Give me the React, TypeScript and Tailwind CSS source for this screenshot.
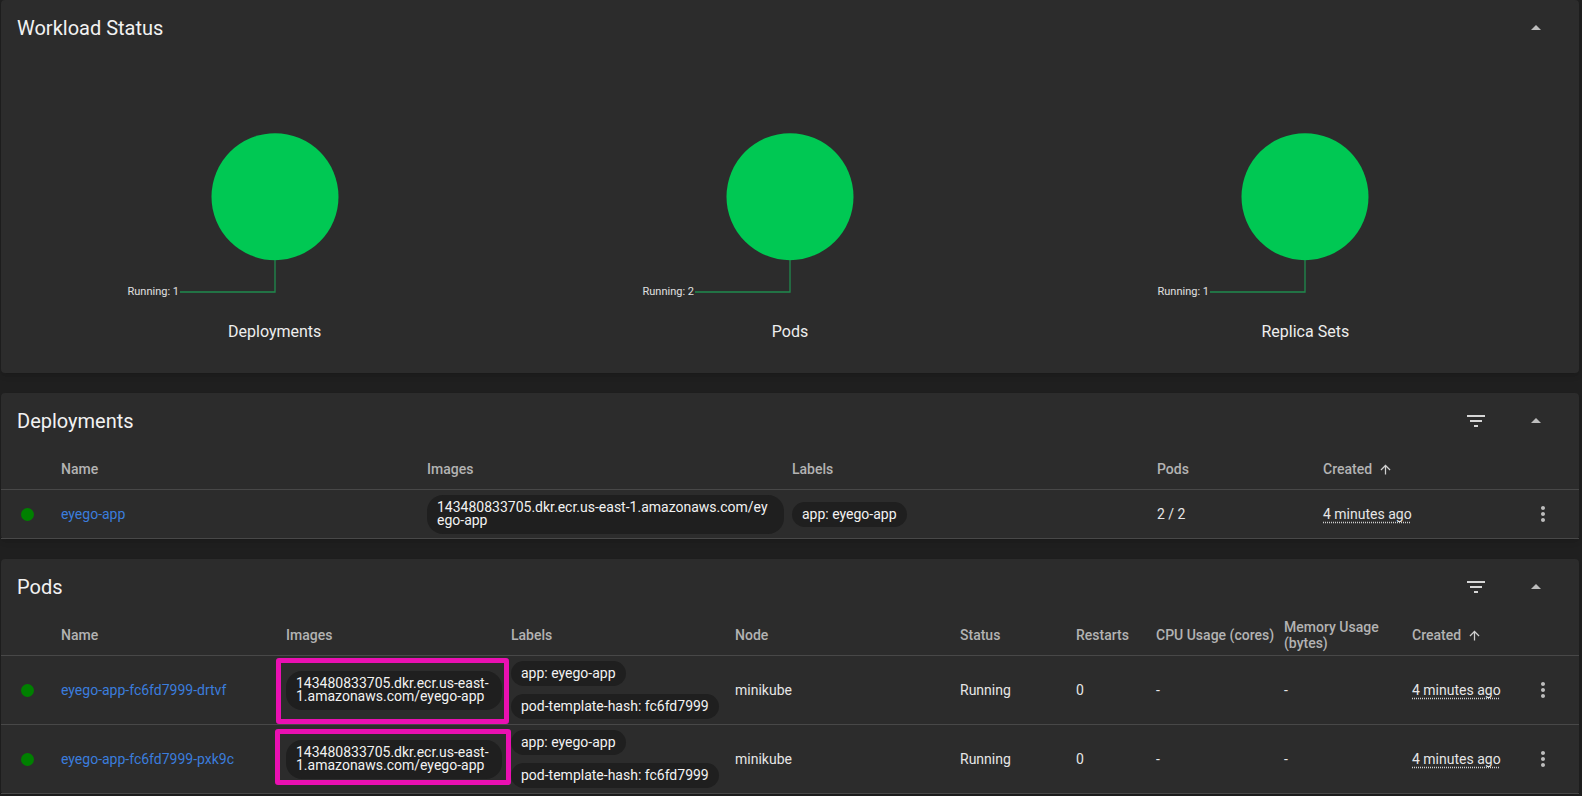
import React from "react";

const font = { fontFamily: "Roboto, 'Noto Sans', sans-serif" };

function ArrowDropUp() {
  return (
    <svg className="w-6 h-6 text-[#bdbdbd]" viewBox="0 0 24 24" fill="currentColor">
      <path d="m7 14 5-5 5 5z" />
    </svg>
  );
}

function FilterIcon() {
  return (
    <svg className="w-6 h-6 text-[#d6d6d6]" viewBox="0 0 24 24" fill="currentColor">
      <path d="M10 18h4v-2h-4zM3 6v2h18V6zm3 7h12v-2H6z" />
    </svg>
  );
}

function MoreVert() {
  return (
    <svg className="w-6 h-6 text-[#bdbdbd]" viewBox="0 0 24 24" fill="currentColor">
      <path d="M12 8c1.1 0 2-.9 2-2s-.9-2-2-2-2 .9-2 2 .9 2 2 2m0 2c-1.1 0-2 .9-2 2s.9 2 2 2 2-.9 2-2-.9-2-2-2m0 6c-1.1 0-2 .9-2 2s.9 2 2 2 2-.9 2-2-.9-2-2-2" />
    </svg>
  );
}

function ArrowUp() {
  return (
    <svg className="w-[15px] h-[15px] ml-[6px] text-[#d0d0d0]" viewBox="0 0 24 24" fill="currentColor">
      <path d="M4 12l1.41 1.41L11 7.83V20h2V7.83l5.58 5.59L20 12l-8-8-8 8z" />
    </svg>
  );
}

function CardHeader({ title, filter }: { title: string; filter?: boolean }) {
  return (
    <div className="flex items-start h-[56px] pl-4 pr-[23px]">
      <h2 className="pt-3 text-[20px] leading-[32px] text-[#f2f2f2] flex-1">{title}</h2>
      <div className="flex items-center h-[57px] -mt-[0.5px]">
        {filter && (
          <div className="w-10 h-10 flex items-center justify-center mr-5">
            <FilterIcon />
          </div>
        )}
        <div className="w-10 h-10 flex items-center justify-center">
          <ArrowDropUp />
        </div>
      </div>
    </div>
  );
}

function Pie({ label, count }: { label: string; count: number }) {
  return (
    <div className="flex flex-col items-center">
      <svg width="300" height="210" viewBox="0 0 300 210">
        <circle cx="150" cy="96.7" r="63.5" fill="#00c853" />
        <polyline points="150,160 150,192 55,192" fill="none" stroke="#1f8a4d" strokeWidth="1.3" />
        <text x="54" y="192" textAnchor="end" dominantBaseline="middle" fontSize="11" fill="#e0e0e0" style={font}>
          Running: {count}
        </text>
      </svg>
      <div className="mt-[10px] text-[16px] leading-6 text-[#eeeeee]">{label}</div>
    </div>
  );
}

function Dot() {
  return (
    <div className="pl-[20px] flex items-center">
      <span className="block w-[13px] h-[13px] rounded-full bg-[#008000]" />
    </div>
  );
}

function Created() {
  return <span className="underline decoration-dotted underline-offset-[3px] decoration-[#cfcfcf]">4 minutes ago</span>;
}

const hdr = "flex items-center pl-4 text-[14px] font-medium text-[#b3b3b3] leading-[16.5px]";
const cell = "flex items-center pl-4 text-[14px] text-[#e6e6e6]";
const depCols = "grid grid-cols-[44px_366px_365px_365px_166px_200px_1fr]";
const podCols = "grid grid-cols-[44px_225px_225px_224px_225px_116px_80px_128px_128px_111px_1fr]";

function LabelChip({ text }: { text: string }) {
  return (
    <span className="inline-flex items-center h-[25px] rounded-full bg-[#1f1f1f] px-[10px] text-[14px] text-[#f2f2f2] whitespace-nowrap">
      {text}
    </span>
  );
}

const pods = [
  { name: "eyego-app-fc6fd7999-drtvf", box: "-left-[10.5px] -right-[6.5px] -top-[12.5px] -bottom-[14px]" },
  { name: "eyego-app-fc6fd7999-pxk9c", box: "-left-[11.5px] -right-[9px] -top-[11px] -bottom-[6.5px]" },
];

export default function App() {
  return (
    <div className="min-h-screen bg-[#1f1f1f] pl-px pr-[3px] flex flex-col gap-5" style={font}>
      {/* Workload status */}
      <section className="bg-[#2c2c2c] rounded-[4px] shadow-md">
        <CardHeader title="Workload Status" />
        <div className="grid grid-cols-3 px-4 pt-[44px] pb-[29px]">
          <Pie label="Deployments" count={1} />
          <Pie label="Pods" count={2} />
          <Pie label="Replica Sets" count={1} />
        </div>
      </section>

      {/* Deployments */}
      <section className="bg-[#2c2c2c] rounded-[4px] shadow-md">
        <CardHeader title="Deployments" filter />
        <div className={`${depCols} h-[41px] border-b border-[#484848]`}>
          <div />
          <div className={hdr}>Name</div>
          <div className={hdr}>Images</div>
          <div className={hdr}>Labels</div>
          <div className={hdr}>Pods</div>
          <div className={hdr}>
            Created
            <ArrowUp />
          </div>
          <div />
        </div>
        <div className={`${depCols} h-[49px] border-b border-[#484848]`}>
          <Dot />
          <div className={cell}>
            <span className="text-[#3b7ddd]">eyego-app</span>
          </div>
          <div className={cell}>
            <div className="w-[357px] shrink-0 rounded-[16px] bg-[#1f1f1f] pl-[10px] py-[6px] text-[14px] leading-[13.5px] text-[#f2f2f2] whitespace-nowrap">
              143480833705.dkr.ecr.us-east-1.amazonaws.com/ey
              <br />
              ego-app
            </div>
          </div>
          <div className={cell}>
            <LabelChip text="app: eyego-app" />
          </div>
          <div className={cell}>2 / 2</div>
          <div className={cell}>
            <Created />
          </div>
          <div className="flex items-center justify-center">
            <MoreVert />
          </div>
        </div>
      </section>

      {/* Pods */}
      <section className="bg-[#2c2c2c] rounded-[4px] shadow-md">
        <CardHeader title="Pods" filter />
        <div className={`${podCols} h-[41px] border-b border-[#484848]`}>
          <div />
          <div className={hdr}>Name</div>
          <div className={hdr}>Images</div>
          <div className={hdr}>Labels</div>
          <div className={hdr}>Node</div>
          <div className={hdr}>Status</div>
          <div className={hdr}>Restarts</div>
          <div className={`${hdr} whitespace-nowrap`}>CPU Usage (cores)</div>
          <div className={hdr}>Memory Usage (bytes)</div>
          <div className={hdr}>
            Created
            <ArrowUp />
          </div>
          <div />
        </div>
        {pods.map((p) => (
          <div key={p.name} className={`${podCols} h-[69px] border-b border-[#484848]`}>
            <Dot />
            <div className={cell}>
              <span className="text-[#3b7ddd]">{p.name}</span>
            </div>
            <div className={cell}>
              <div className="relative">
                <div className="w-[216px] rounded-[16px] bg-[#1f1f1f] pl-[10px] pr-[12px] py-[6px] text-[14px] leading-[13.5px] text-[#f2f2f2] break-all">
                  143480833705.dkr.ecr.us-east-1.amazonaws.com/eyego-app
                </div>
                <div className={`absolute ${p.box} border-[5px] border-[#ea10b2] rounded-[3px] pointer-events-none`} />
              </div>
            </div>
            <div className={`${cell} flex-col items-start justify-center gap-2`}>
              <LabelChip text="app: eyego-app" />
              <LabelChip text="pod-template-hash: fc6fd7999" />
            </div>
            <div className={cell}>minikube</div>
            <div className={cell}>Running</div>
            <div className={cell}>0</div>
            <div className={cell}>-</div>
            <div className={cell}>-</div>
            <div className={cell}>
              <Created />
            </div>
            <div className="flex items-center justify-center">
              <MoreVert />
            </div>
          </div>
        ))}
      </section>
    </div>
  );
}
